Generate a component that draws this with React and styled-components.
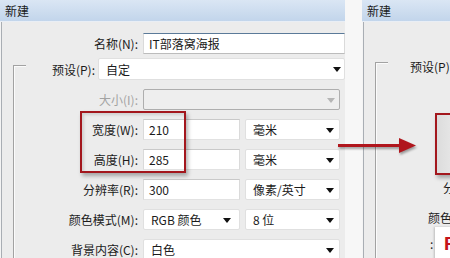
import React from "react";
import styled, {createGlobalStyle} from "styled-components";

const GlobalStyle = createGlobalStyle`
  html, body {
    margin: 0;
    padding: 0;
    background: #f7f7f7;
  }
  body {
    font-family: "Noto Sans CJK SC", "Noto Sans", sans-serif;
    font-size: 12px;
    color: #1b1b1b;
  }
`

const Stage = styled.div`
  position: relative;
  width: 450px;
  height: 258px;
  overflow: hidden;
  display: flex;
  background: #f7f7f7;
`

const Dialog = styled.div`
  display: flex;
  flex-direction: column;
  width: ${p => p.$w}px;
  margin-left: ${p => p.$ml || 0}px;
  flex-shrink: 0;
`

const TitleBar = styled.div`
  height: 21px;
  line-height: 21px;
  padding-left: 5px;
  background: linear-gradient(#dae6f4, #c2d5eb);
  border-bottom: 1px solid #e9eef5;
  color: #1a1a1a;
  white-space: nowrap;
`

const Body = styled.div`
  flex: 1;
  display: flex;
  flex-direction: column;
  padding-top: ${p => p.$pt}px;
  background: #ececec;
  box-shadow: inset 1px 0 #f4f4f4, inset 2px 0 #a9aeb4;
`

const Group = styled.div`
  position: relative;
  display: flex;
  flex-direction: column;
  margin-left: 13px;
  margin-top: ${p => p.$mt || 0}px;

  &::before {
    content: "";
    position: absolute;
    left: 0;
    top: ${p => p.$tick}px;
    bottom: -60px;
    width: 12px;
    border-left: 1px solid #a2a2a2;
    border-top: 1px solid #a2a2a2;
    box-shadow: inset 1px 1px #fbfbfb;
  }
`

const Row = styled.div`
  display: flex;
  align-items: center;
  height: ${p => p.$h || 21}px;
  margin-top: ${p => p.$mt || 0}px;
  gap: ${p => p.$gap ?? 5}px;
  white-space: nowrap;
`

const Label = styled.div`
  width: ${p => p.$w}px;
  flex-shrink: 0;
  text-align: right;
  color: ${p => (p.$dim ? "#a3a3a3" : "#1b1b1b")};
`

const TextBox = styled.div`
  box-sizing: border-box;
  width: ${p => p.$w}px;
  height: 21px;
  line-height: 19px;
  padding-left: 5px;
  background: #fff;
  border: 1px solid #dadada;
  border-top-color: ${p => (p.$focus ? "#5b7a99" : "#c9c9c9")};
  border-bottom-color: ${p => (p.$focus ? "#bcbcbc" : "#e2e2e2")};
`

const Select = styled.div`
  box-sizing: border-box;
  display: flex;
  align-items: center;
  justify-content: space-between;
  width: ${p => p.$w}px;
  height: ${p => p.$h || 21}px;
  padding: 0 ${p => p.$pr || 5}px 0 7px;
  background: ${p => (p.$disabled ? "#eeeeee" : "#fff")};
  border: 1px solid ${p => (p.$disabled ? "#aeaeae" : "#e0e0e0")};
  border-radius: 2px;
  color: #1b1b1b;
`

const Caret = styled.span`
  width: 0;
  height: 0;
  border-left: 4px solid transparent;
  border-right: 4px solid transparent;
  border-top: 5px solid ${p => (p.$dim ? "#b5b5b5" : "#111")};
  margin-top: 1px;
`

const Callout = styled.div`
  position: absolute;
  left: 80px;
  top: 111px;
  width: 106px;
  height: 62px;
  box-sizing: border-box;
  border: 2px solid #a3171d;
  box-shadow: 2px 3px 4px rgba(0, 0, 0, 0.3), inset 2px 2px 3px rgba(0, 0, 0, 0.12);
  pointer-events: none;
`

const Arrow = styled.svg`
  position: absolute;
  left: 336px;
  top: 134px;
  filter: drop-shadow(1px 2px 1px rgba(0, 0, 0, 0.35));
`

const Note = styled.div`
  margin-left: ${p => p.$ml}px;
  margin-top: ${p => p.$mt || 0}px;
  height: ${p => p.$h || 20}px;
  line-height: ${p => p.$h || 20}px;
  white-space: nowrap;
`

const Zoomed = styled.div`
  box-sizing: border-box;
  margin-left: 60px;
  margin-top: ${p => p.$mt}px;
  width: 70px;
  height: 62px;
  border: 2px solid #a3171d;
  background: linear-gradient(90deg, #dcdcdc, #e9e9e9 30%, #ececec);
  box-shadow: 2px 3px 4px rgba(0, 0, 0, 0.3);
`

const Tail = styled.div`
  display: flex;
  align-items: flex-start;
  margin-left: 55px;
`

const Colon = styled.span`
  margin-top: 8px;
  width: 3px;
`

const Badge = styled.div`
  margin-left: 2px;
  width: 40px;
  height: 40px;
  padding: 7px 0 0 9px;
  background: #fff;
  box-shadow: -1px 0 2px rgba(0, 0, 0, 0.2);
  font-family: "Liberation Sans", Arial, sans-serif;
  font-weight: bold;
  font-size: 19px;
  line-height: 20px;
  color: #c4141c;
`

const units = [
    {label: "宽度(W):", value: "210", unit: "毫米"},
    {label: "高度(H):", value: "285", unit: "毫米"},
    {label: "分辨率(R):", value: "300", unit: "像素/英寸"},
]

const App = () => {
    return (
        <>
            <GlobalStyle/>
            <Stage>
                <Dialog $w={345}>
                    <TitleBar>新建</TitleBar>
                    <Body $pt={11}>
                        <Row>
                            <Label $w={138}>名称(N):</Label>
                            <TextBox $w={202} $focus>IT部落窝海报</TextBox>
                        </Row>
                        <Group $mt={4} $tick={7}>
                            <Row $h={22} $gap={3}>
                                <Label $w={82}>预设(P):</Label>
                                <Select $w={247} $h={22} $pr={3}>自定<Caret/></Select>
                            </Row>
                            <Row $mt={9}>
                                <Label $w={125} $dim>大小(I):</Label>
                                <Select $w={197} $disabled $pr={4}><span/><Caret $dim/></Select>
                            </Row>
                            {units.map(u => (
                                <Row $mt={9} key={u.label}>
                                    <Label $w={125}>{u.label}</Label>
                                    <TextBox $w={97}>{u.value}</TextBox>
                                    <Select $w={95}>{u.unit}<Caret/></Select>
                                </Row>
                            ))}
                            <Row $mt={9}>
                                <Label $w={125}>颜色模式(M):</Label>
                                <Select $w={97} $pr={8}>RGB 颜色<Caret/></Select>
                                <Select $w={95}>8 位<Caret/></Select>
                            </Row>
                            <Row $mt={9}>
                                <Label $w={125}>背景内容(C):</Label>
                                <Select $w={197}>白色<Caret/></Select>
                            </Row>
                        </Group>
                    </Body>
                </Dialog>

                <Dialog $w={88} $ml={17}>
                    <TitleBar>新建</TitleBar>
                    <Body $pt={34}>
                        <Group $tick={6}>
                            <Note $ml={35} $h={22}>预设(P):</Note>
                            <Zoomed $mt={35}/>
                            <Note $ml={68} $mt={3}>分辨率(R):</Note>
                            <Note $ml={53} $mt={11} $h={18}>颜色模式(M):</Note>
                            <Tail>
                                <Colon>:</Colon>
                                <Badge>PS</Badge>
                            </Tail>
                        </Group>
                    </Body>
                </Dialog>

                <Callout/>
                <Arrow width="82" height="24" viewBox="0 0 82 24">
                    <rect x="2" y="10" width="64" height="3" fill="#b0161d"/>
                    <polygon points="63,4 80,11.5 63,19" fill="#b0161d"/>
                </Arrow>
            </Stage>
        </>
    )
}

export default App
